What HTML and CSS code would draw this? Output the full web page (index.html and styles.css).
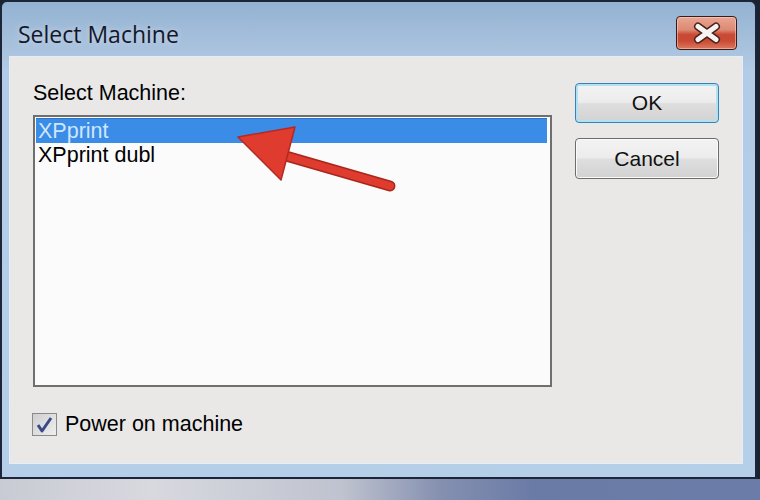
FILE: index.html
```html
<!DOCTYPE html>
<html lang="en">
<head>
  <meta charset="UTF-8" />
  <title>Select Machine</title>
  <link rel="stylesheet" href="styles.css">
</head>
<body>

  <!-- Dialog Window -->
  <div class="window">
    <div class="titlebar">
      <div class="title">Select Machine</div>
      <button class="close-btn">
        <svg width="28" height="22" viewBox="-14 -11 28 22">
          <path d="M-9 -6.5 L9 6.5 M9 -6.5 L-9 6.5" stroke="#4a2018" stroke-width="8" stroke-linecap="round" fill="none"/>
          <path d="M-9 -6.5 L9 6.5 M9 -6.5 L-9 6.5" stroke="#f6f4f2" stroke-width="5" stroke-linecap="round" fill="none"/>
        </svg>
      </button>
    </div>

    <div class="client">
      <div class="main-col">
        <div class="label">Select Machine:</div>
        <div class="listbox">
          <div class="item selected">XPprint</div>
          <div class="item">XPprint dubl</div>
        </div>
        <label class="check-row">
          <span class="checkbox">
            <svg width="23" height="21" viewBox="0 0 23 21">
              <path d="M5 11 L9 17 L18 4" stroke="#3a4a86" stroke-width="3" fill="none" stroke-linejoin="round"/>
            </svg>
          </span>
          <span>Power on machine</span>
        </label>
      </div>
      <div class="side-col">
        <button class="btn btn-default">OK</button>
        <button class="btn">Cancel</button>
      </div>
    </div>
  </div>

  <div class="desktop"></div>

  <!-- red pointer drawn over the list -->
  <svg class="arrow" width="760" height="500" viewBox="0 0 760 500">
    <line x1="272" y1="152" x2="390" y2="186" stroke="#a8261c" stroke-width="11" stroke-linecap="round"/>
    <line x1="272" y1="152" x2="390" y2="186" stroke="#df3b2e" stroke-width="8" stroke-linecap="round"/>
    <polygon points="238,137 295,127 281,180" fill="#df3b2e" stroke="#b52a20" stroke-width="1.5" stroke-linejoin="round"/>
  </svg>

</body>
</html>
```

FILE: styles.css
```css
body {
  margin: 0;
  width: 760px;
  height: 500px;
  background-color: #1b2232;
  font-family: "Liberation Sans", Arial, sans-serif;
  position: relative;
  overflow: hidden;
}
.window {
  width: 753px;
  height: 475px;
  border: 2px solid #1c2638;
  border-radius: 7px 7px 0 0;
  background: linear-gradient(#93b2d2 0, #a6c0dc 40px, #b2cbe6 70px, #b6cfe9 100%);
  display: flex;
  flex-direction: column;
}
.titlebar {
  height: 55px;
  display: flex;
  align-items: center;
  justify-content: space-between;
  padding: 0 18px 0 16px;
}
.title {
  font-family: "Open Sans", "Noto Sans", sans-serif;
  font-size: 23px;
  color: #15172a;
  text-shadow: 0 0 6px rgba(255, 255, 255, 0.5);
  margin-top: 9px;
}
.close-btn {
  width: 61px;
  height: 34px;
  border: 1px solid #3a1a14;
  border-radius: 4px;
  background: linear-gradient(#eaa593 0, #dc8a74 40%, #c84a34 55%, #c94b35 75%, #dc7a60 100%);
  box-shadow: inset 0 0 0 1px rgba(255, 220, 210, 0.5);
  display: flex;
  align-items: center;
  justify-content: center;
  padding: 0;
  margin-top: 7px;
}
.client {
  flex: 1;
  margin: 0 13px 14px 8px;
  background-color: #e9e8e7;
  box-shadow: 0 0 0 1px rgba(240, 246, 252, 0.8);
  display: flex;
  gap: 23px;
  padding: 23px 23px 0 23px;
}
.main-col {
  width: 519px;
  display: flex;
  flex-direction: column;
}
.label {
  font-size: 21.5px;
  line-height: 26px;
  margin-bottom: 9px;
}
.listbox {
  height: 266px;
  border: 2px solid #6f6f6f;
  background-color: #fbfbfb;
  padding: 1px 3px 1px 1px;
}
.item {
  font-size: 21.5px;
  line-height: 25px;
  height: 25px;
  padding-left: 2px;
  color: #000;
}
.item.selected {
  background-color: #3a8ce6;
  border-top: 1px solid #2f74c4;
  height: 24px;
  line-height: 24px;
  color: #cfe6ff;
}
.check-row {
  display: flex;
  align-items: center;
  gap: 8px;
  margin-top: 25px;
  margin-left: -1px;
  font-size: 21.5px;
}
.checkbox {
  width: 23px;
  height: 21px;
  border: 1px solid #8a8a8a;
  background: linear-gradient(135deg, #cfcfd2, #eeeeee);
  display: flex;
}
.side-col {
  width: 144px;
  display: flex;
  flex-direction: column;
  gap: 15px;
  padding-top: 3px;
}
.btn {
  height: 41px;
  border: 1px solid #6c6c6c;
  border-radius: 4px;
  background: linear-gradient(#f3f3f3 0, #ececec 48%, #dedede 52%, #d2d2d2 100%);
  box-shadow: inset 0 0 0 1px #fbfbfb;
  font-family: "Liberation Sans", Arial, sans-serif;
  font-size: 21px;
  color: #111;
  padding: 0;
}
.btn-default {
  height: 40px;
  border-color: #3c7fb1;
  box-shadow: inset 0 0 0 2px #aee3f5;
}
.desktop {
  height: 21px;
  background: linear-gradient(90deg, #c9cbd4 0, #d8d9df 20%, #bfc3cf 45%, #8590b0 58%, #6a7ba6 70%, #6b7ca8 100%);
}
.arrow {
  position: absolute;
  left: 0;
  top: 0;
  pointer-events: none;
}
```
